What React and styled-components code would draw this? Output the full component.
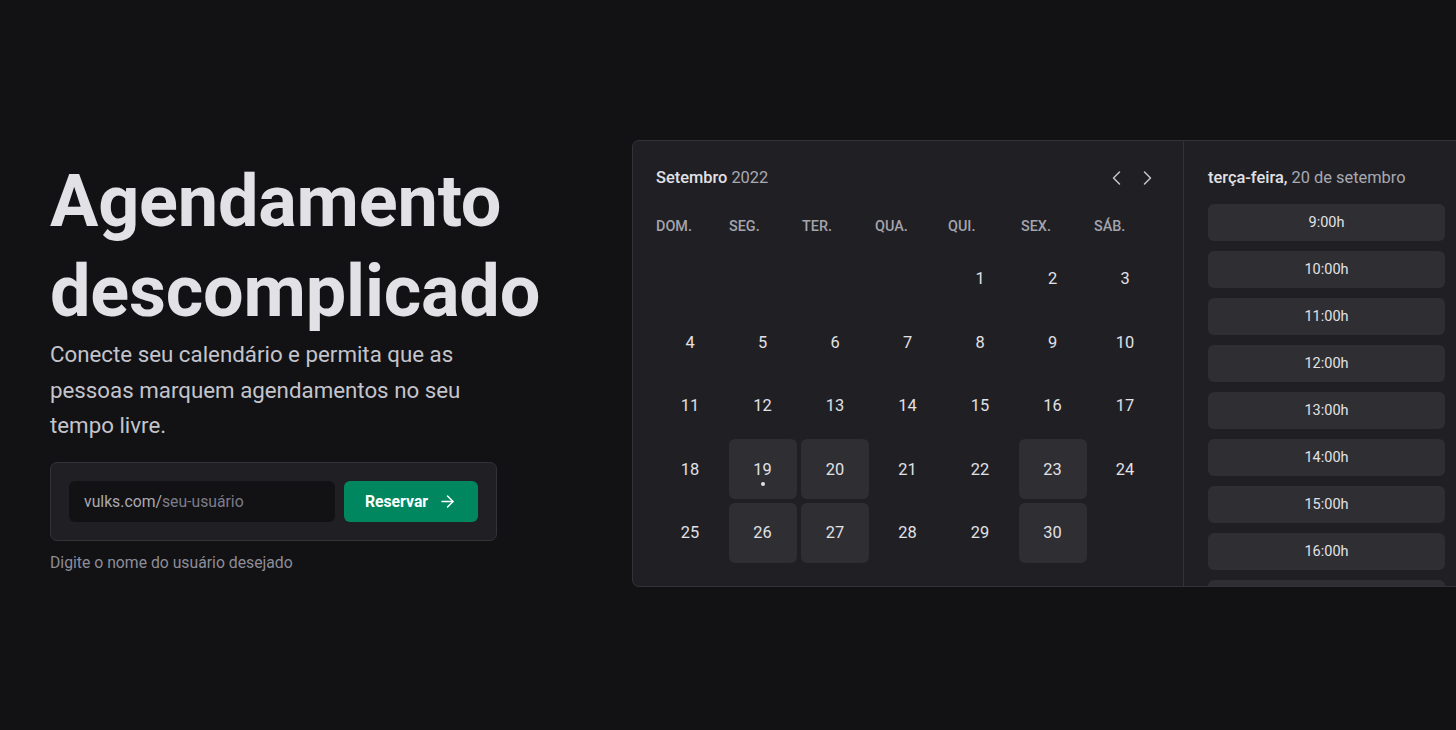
import React from "react";
import styled, { createGlobalStyle } from "styled-components";
import { ArrowRight } from "lucide-react";

const GlobalStyle = createGlobalStyle`
  * {
    box-sizing: border-box;
    margin: 0;
    padding: 0;
  }
  html, body {
    background: #121214;
    overflow: hidden;
  }
  body {
    font-family: "Roboto", "Liberation Sans", sans-serif;
    color: #e1e1e6;
    -webkit-font-smoothing: antialiased;
  }
`;

const WEEK_DAYS = ["DOM.", "SEG.", "TER.", "QUA.", "QUI.", "SEX.", "SÁB."];
const AVAILABLE = [19, 20, 23, 26, 27, 30];
const TODAY = 19;
const HOURS = [9, 10, 11, 12, 13, 14, 15, 16, 17];

const App = () => {
  const blanks = Array.from({ length: 4 });
  const days = Array.from({ length: 30 }, (_, i) => i + 1);

  return (
    <Wrapper>
      <GlobalStyle />
      <Hero>
        <Title>Agendamento descomplicado</Title>
        <Lead>
          Conecte seu calendário e permita que as pessoas marquem agendamentos
          no seu tempo livre.
        </Lead>
        <ClaimForm onSubmit={(e) => e.preventDefault()}>
          <UrlField>
            <Prefix>vulks.com/</Prefix>
            <UrlInput placeholder="seu-usuário" />
          </UrlField>
          <SubmitButton type="submit">
            Reservar
            <ArrowRight size={19} strokeWidth={1.8} />
          </SubmitButton>
        </ClaimForm>
        <Hint>Digite o nome do usuário desejado</Hint>
      </Hero>

      <Scheduler>
        <Calendar>
          <CalendarHeader>
            <MonthTitle>
              Setembro <span>2022</span>
            </MonthTitle>
            <Arrows>
              <ArrowButton aria-label="Mês anterior">
                <svg width="20" height="20" viewBox="0 0 20 20" fill="none">
                  <path
                    d="M12.5 4 L6.5 10 L12.5 16"
                    stroke="currentColor"
                    strokeWidth="1.5"
                    strokeLinecap="round"
                    strokeLinejoin="round"
                  />
                </svg>
              </ArrowButton>
              <ArrowButton aria-label="Próximo mês">
                <svg width="20" height="20" viewBox="0 0 20 20" fill="none">
                  <path
                    d="M7.5 4 L13.5 10 L7.5 16"
                    stroke="currentColor"
                    strokeWidth="1.5"
                    strokeLinecap="round"
                    strokeLinejoin="round"
                  />
                </svg>
              </ArrowButton>
            </Arrows>
          </CalendarHeader>

          <WeekRow>
            {WEEK_DAYS.map((d) => (
              <WeekDay key={d}>{d}</WeekDay>
            ))}
          </WeekRow>

          <DaysGrid>
            {blanks.map((_, i) => (
              <span key={`b${i}`} />
            ))}
            {days.map((d) => (
              <Day key={d} $available={AVAILABLE.includes(d)}>
                {d}
                {d === TODAY && <TodayDot />}
              </Day>
            ))}
          </DaysGrid>
        </Calendar>

        <TimePicker>
          <TimeHeader>
            terça-feira, <span>20 de setembro</span>
          </TimeHeader>
          <TimeList>
            {HOURS.map((h) => (
              <TimeItem key={h}>{h}:00h</TimeItem>
            ))}
          </TimeList>
        </TimePicker>
      </Scheduler>
    </Wrapper>
  );
};

const Wrapper = styled.main`
  height: 730px;
  width: 1456px;
  display: flex;
  align-items: center;
  gap: 42px;
  padding-left: 50px;
  overflow: hidden;
`;

const Hero = styled.section`
  width: 540px;
  flex-shrink: 0;
  display: flex;
  flex-direction: column;
  margin-top: 2px;
`;

const Title = styled.h1`
  font-size: 72px;
  line-height: 1.25;
  font-weight: 700;
  color: #e1e1e6;
  letter-spacing: -0.2px;
`;

const Lead = styled.p`
  max-width: 470px;
  font-size: 22.3px;
  line-height: 1.6;
  color: #c4c4cc;
`;

const ClaimForm = styled.form`
  margin-top: 18px;
  width: 447px;
  display: grid;
  grid-template-columns: minmax(0, 1fr) 134px;
  gap: 9px;
  padding: 18px;
  background: #202024;
  border: 1px solid #323238;
  border-radius: 7px;
`;

const UrlField = styled.label`
  min-width: 0;
  height: 41px;
  display: flex;
  align-items: center;
  padding: 0 15px;
  background: #121214;
  border-radius: 6px;
  font-size: 15.75px;
`;

const Prefix = styled.span`
  color: #a9a9b2;
`;

const UrlInput = styled.input`
  flex: 1;
  width: 0;
  min-width: 0;
  border: none;
  outline: none;
  background: transparent;
  font-family: inherit;
  font-size: 15.75px;
  color: #e1e1e6;

  &::placeholder {
    color: #7c7c8a;
  }
`;

const SubmitButton = styled.button`
  height: 41px;
  display: flex;
  align-items: center;
  justify-content: center;
  gap: 10px;
  border: none;
  border-radius: 6px;
  background: #00875f;
  color: #ffffff;
  font-family: inherit;
  font-size: 15.75px;
  font-weight: 700;
  cursor: pointer;
`;

const Hint = styled.p`
  margin-top: 9px;
  font-size: 15.75px;
  line-height: 1.6;
  color: #8d8d99;
`;

const Scheduler = styled.section`
  flex-shrink: 0;
  height: 447px;
  margin-bottom: 4px;
  display: grid;
  grid-template-columns: 550px 286px;
  background: #202024;
  border: 1px solid #323238;
  border-radius: 7px;
  overflow: hidden;
`;

const Calendar = styled.div`
  padding: 24px 24px 24px 23px;
  display: flex;
  flex-direction: column;
`;

const CalendarHeader = styled.div`
  height: 26px;
  display: flex;
  align-items: center;
  justify-content: space-between;
`;

const MonthTitle = styled.h2`
  font-size: 16.4px;
  font-weight: 500;
  color: #e1e1e6;

  span {
    color: #a9a9b2;
    font-weight: 400;
  }
`;

const Arrows = styled.div`
  display: flex;
  gap: 10px;
  margin-right: 2px;
`;

const ArrowButton = styled.button`
  width: 20px;
  height: 20px;
  display: flex;
  align-items: center;
  justify-content: center;
  border: none;
  background: transparent;
  color: #c4c4cc;
  cursor: pointer;
`;

const WeekRow = styled.div`
  margin-top: 26px;
  display: grid;
  grid-template-columns: repeat(7, 68.5px);
  column-gap: 4.5px;
`;

const WeekDay = styled.span`
  font-size: 14.4px;
  line-height: 20px;
  font-weight: 500;
  color: #a4a4ad;
`;

const DaysGrid = styled.div`
  margin-top: 12px;
  display: grid;
  grid-template-columns: repeat(7, 68px);
  grid-auto-rows: 60px;
  column-gap: 4.5px;
  row-gap: 3.5px;
`;

const Day = styled.button`
  position: relative;
  display: flex;
  align-items: center;
  justify-content: center;
  border: none;
  border-radius: 6px;
  background: ${({ $available }) => ($available ? "#2e2e33" : "transparent")};
  color: #e1e1e6;
  font-family: inherit;
  font-size: 16.4px;
  font-weight: 400;
  cursor: ${({ $available }) => ($available ? "pointer" : "default")};
`;

const TodayDot = styled.span`
  position: absolute;
  left: 50%;
  bottom: 13px;
  width: 4px;
  height: 4px;
  margin-left: -2px;
  border-radius: 50%;
  background: #e1e1e6;
`;

const TimePicker = styled.aside`
  border-left: 1px solid #323238;
  padding: 24px 24px 0 24px;
  display: flex;
  flex-direction: column;
  overflow: hidden;
`;

const TimeHeader = styled.h3`
  flex-shrink: 0;
  height: 26px;
  display: flex;
  align-items: center;
  font-size: 16.4px;
  font-weight: 500;
  color: #e1e1e6;
  white-space: pre;

  span {
    color: #a9a9b2;
    font-weight: 400;
  }
`;

const TimeList = styled.div`
  flex-shrink: 0;
  margin-top: 13px;
  display: flex;
  flex-direction: column;
  gap: 10px;
`;

const TimeItem = styled.button`
  flex-shrink: 0;
  height: 37px;
  border: none;
  border-radius: 6px;
  background: #2e2e33;
  color: #e1e1e6;
  font-family: inherit;
  font-size: 14.5px;
  cursor: pointer;
`;

export default App;
